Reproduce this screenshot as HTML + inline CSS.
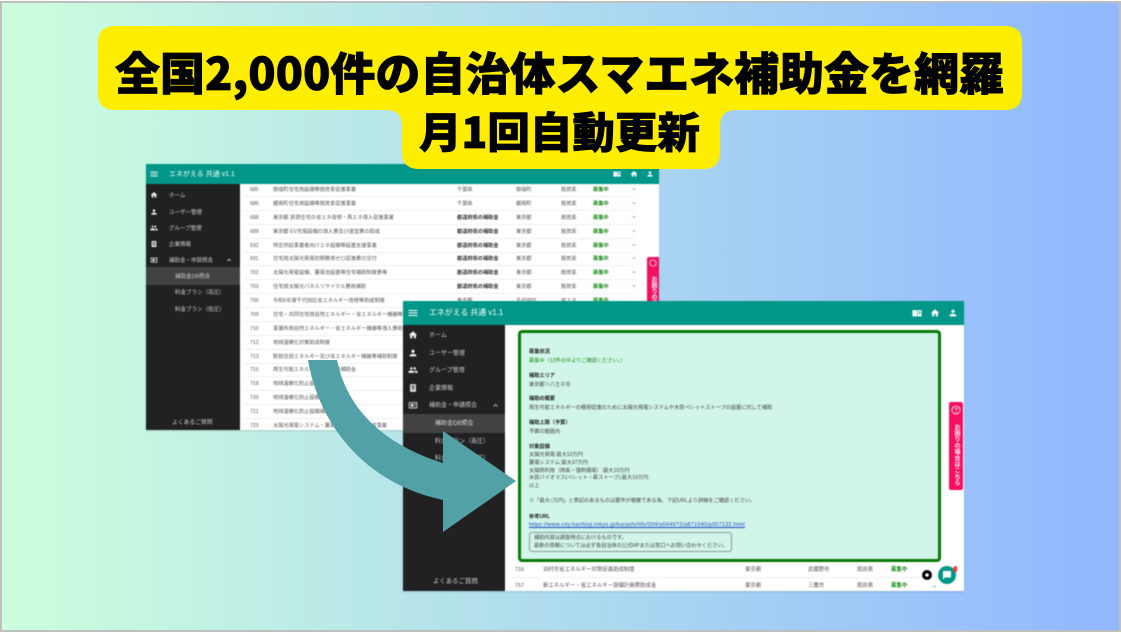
<!DOCTYPE html>
<html lang="ja"><head><meta charset="utf-8"><title>エネがえる</title>
<style>
html,body{margin:0;padding:0;width:1121px;height:633px;overflow:hidden;background:#fff}
*{box-sizing:border-box}
body{font-family:"Liberation Sans","Noto Sans CJK JP",sans-serif;position:relative}
.bg{position:absolute;left:0;top:1px;width:1121px;height:631px;border:2px solid #bfbfbf;background:linear-gradient(90deg,#ccffdd 0%,#91b7ff 100%)}
.app{position:absolute;background:#fff;overflow:hidden;filter:blur(.5px);box-shadow:0 1px 2px rgba(0,0,0,.12)}
.abs,.app div,.app span.t{position:absolute;white-space:nowrap}
.hd{left:0;top:0;background:#009688;color:#fff}
.sb{left:0;background:#212121;color:#ddd}
.r{left:0;height:1px;background:#eee}
.a1{font-size:5.2px;color:#555;line-height:8px}
.a2{font-size:5.4px;color:#555;line-height:8px}
.b{font-weight:700;color:#333}
.g{font-weight:700;color:#138a13}
.box div{font-size:5.2px;line-height:8px;color:#444}
.box .h{font-weight:700;color:#222}
svg.i{position:absolute;fill:currentColor}
.ttl{position:absolute;font-weight:900;color:#000;white-space:nowrap;font-family:"Noto Sans CJK JP","Liberation Sans",sans-serif;filter:blur(.35px);-webkit-text-stroke:.8px #000}
.s1{color:#ccc;font-size:5.5px;margin-top:1px}
.s2{color:#ccc;font-size:6px;margin-top:2px}
</style></head><body>
<svg width="0" height="0" style="position:absolute"><defs>
<symbol id="home" viewBox="0 0 24 24"><path d="M10 20v-6h4v6h5v-8h3L12 3 2 12h3v8z"/></symbol>
<symbol id="user" viewBox="0 0 24 24"><path d="M12 12c2.200 0 4-1.800 4-4s-1.800-4-4-4-4 1.800-4 4 1.800 4 4 4zm0 2c-2.700 0-8 1.300-8 4v2h16v-2c0-2.700-5.300-4-8-4z"/></symbol>
<symbol id="group" viewBox="0 0 24 24"><path d="M16 11c1.700 0 3-1.300 3-3s-1.300-3-3-3-3 1.300-3 3 1.300 3 3 3zm-8 0c1.700 0 3-1.300 3-3S9.700 5 8 5 5 6.300 5 8s1.300 3 3 3zm0 2c-2.300 0-7 1.200-7 3.500V19h14v-2.500C15 14.200 10.300 13 8 13zm8 0h-1c1.200.8 2 2 2 3.500V19h6v-2.500c0-2.300-4.700-3.500-7-3.500z"/></symbol>
<symbol id="biz" viewBox="0 0 24 24"><path d="M5 3h14v18H5zM8 6v2h8V6zm0 4v2h8v-2zm0 4v2h8v-2z" fill-rule="evenodd"/></symbol>
<symbol id="calc" viewBox="0 0 24 24"><path d="M2 5h20v15H2zM4 7v11h16V7zM7 9h6v7H7zM15 9h3v2h-3zM15 13h3v2h-3z" fill-rule="evenodd"/></symbol>
<symbol id="book" viewBox="0 0 24 24"><path d="M1 5h11v15H1zM13 5h10v15H13zM15 8v2h6V8zm0 4v2h6v-2z" fill-rule="evenodd"/></symbol>
<symbol id="menu" viewBox="0 0 24 24"><path d="M3 6h18v2H3zm0 5h18v2H3zm0 5h18v2H3z"/></symbol>
<symbol id="chev" viewBox="0 0 24 24"><path d="M7.400 8.600 12 13.200l4.600-4.600L18 10l-6 6-6-6z"/></symbol>
<symbol id="up" viewBox="0 0 24 24"><path d="M7.400 15.400 12 10.800l4.600 4.600L18 14l-6-6-6 6z"/></symbol>
</defs></svg>

<div class="bg"></div>

<!-- APP 1 -->
<div class="app a1" style="left:146px;top:164px;width:513px;height:266px">
<div class="hd" style="width:513px;height:20px"></div>
<svg class="i" style="left:3px;top:5px;color:#fff" width="10" height="10"><use href="#menu"/></svg>
<div style="left:23px;top:6px;color:#fff;font-size:7px;line-height:9px">エネがえる 共通 v1.1</div>
<svg class="i" style="left:467px;top:6px;color:#fff" width="8" height="8"><use href="#book"/></svg>
<svg class="i" style="left:484px;top:6px;color:#fff" width="8" height="8"><use href="#home"/></svg>
<svg class="i" style="left:500px;top:6px;color:#fff" width="8" height="8"><use href="#user"/></svg>

<div class="sb" style="top:20px;width:94px;height:246px"></div>
<div style="left:0;top:103px;width:94px;height:18px;background:#424242"></div>
<svg class="i" style="left:4px;top:27px;color:#eee" width="8" height="8"><use href="#home"/></svg>
<svg class="i" style="left:4px;top:44px;color:#eee" width="8" height="8"><use href="#user"/></svg>
<svg class="i" style="left:4px;top:60px;color:#eee" width="8" height="8"><use href="#group"/></svg>
<svg class="i" style="left:4px;top:76px;color:#eee" width="8" height="8"><use href="#biz"/></svg>
<svg class="i" style="left:4px;top:92px;color:#eee" width="8" height="8"><use href="#calc"/></svg>
<svg class="i" style="left:79px;top:92px;color:#eee" width="8" height="8"><use href="#up"/></svg>
<div class="s1" style="left:23px;top:27px">ホーム</div>
<div class="s1" style="left:23px;top:44px">ユーザー管理</div>
<div class="s1" style="left:23px;top:60px">グループ管理</div>
<div class="s1" style="left:23px;top:76px">企業情報</div>
<div class="s1" style="left:23px;top:92px">補助金・申請照会</div>
<div class="s1" style="left:29px;top:108px">補助金DB照会</div>
<div class="s1" style="left:29px;top:124px">料金プラン（高圧）</div>
<div class="s1" style="left:29px;top:141px">料金プラン（低圧）</div>
<div class="s1" style="left:26px;top:254px;font-size:5.800px">よくあるご質問</div>

<div style="left:104px;top:22px">685</div><div style="left:127px;top:22px">御宿町住宅用設備等脱炭素促進事業</div><div style="left:311px;top:22px">千葉県</div><div style="left:370px;top:22px">御宿町</div><div style="left:415px;top:22px">脱炭素</div><div class="g" style="left:447px;top:22px">募集中</div>
<div style="left:104px;top:36px">686</div><div style="left:127px;top:36px">鋸南町住宅用設備等脱炭素促進事業</div><div style="left:311px;top:36px">千葉県</div><div style="left:370px;top:36px">鋸南町</div><div style="left:415px;top:36px">脱炭素</div><div class="g" style="left:447px;top:36px">募集中</div>
<div style="left:104px;top:50px">688</div><div style="left:127px;top:50px">東京都 賃貸住宅の省エネ改修・再エネ導入促進事業</div><div class="b" style="left:311px;top:50px">都道府県の補助金</div><div style="left:370px;top:50px">東京都</div><div style="left:415px;top:50px">脱炭素</div><div class="g" style="left:447px;top:50px">募集中</div>
<div style="left:104px;top:64px">689</div><div style="left:127px;top:64px">東京都 EV充電設備の導入費及び運営費の助成</div><div class="b" style="left:311px;top:64px">都道府県の補助金</div><div style="left:370px;top:64px">東京都</div><div style="left:415px;top:64px">脱炭素</div><div class="g" style="left:447px;top:64px">募集中</div>
<div style="left:104px;top:78px">692</div><div style="left:127px;top:78px">特定供給事業者向けエネ設備等設置支援事業</div><div class="b" style="left:311px;top:78px">都道府県の補助金</div><div style="left:370px;top:78px">東京都</div><div style="left:415px;top:78px">脱炭素</div><div class="g" style="left:447px;top:78px">募集中</div>
<div style="left:104px;top:91px">691</div><div style="left:127px;top:91px">住宅用太陽光発電初期費用ゼロ促進費の交付</div><div class="b" style="left:311px;top:91px">都道府県の補助金</div><div style="left:370px;top:91px">東京都</div><div style="left:415px;top:91px">脱炭素</div><div class="g" style="left:447px;top:91px">募集中</div>
<div style="left:104px;top:105px">702</div><div style="left:127px;top:105px">太陽光発電設備、蓄電池設置等住宅補助制度費等</div><div class="b" style="left:311px;top:105px">都道府県の補助金</div><div style="left:370px;top:105px">東京都</div><div style="left:415px;top:105px">脱炭素</div><div class="g" style="left:447px;top:105px">募集中</div>
<div style="left:104px;top:119px">703</div><div style="left:127px;top:119px">住宅用太陽光パネルリサイクル費用補助</div><div class="b" style="left:311px;top:119px">都道府県の補助金</div><div style="left:370px;top:119px">東京都</div><div style="left:415px;top:119px">脱炭素</div><div class="g" style="left:447px;top:119px">募集中</div>
<div style="left:104px;top:133px">705</div><div style="left:127px;top:133px">令和6年度千代田区省エネルギー改修等助成制度</div><div style="left:311px;top:133px">東京都</div><div style="left:370px;top:133px">千代田区</div><div style="left:415px;top:133px">省エネ</div><div class="g" style="left:447px;top:133px">募集中</div>
<div style="left:104px;top:147px">709</div><div style="left:127px;top:147px">住宅・共同住宅用自然エネルギー・省エネルギー機器等導入</div>
<div style="left:104px;top:161px">710</div><div style="left:127px;top:161px">事業所用自然エネルギー・省エネルギー機器等導入費助成</div>
<div style="left:104px;top:175px">712</div><div style="left:127px;top:175px">地球温暖化対策助成制度</div>
<div style="left:104px;top:189px">713</div><div style="left:127px;top:189px">駅前住民エネルギー及び省エネルギー機器等補助制度</div>
<div style="left:104px;top:202px">715</div><div style="left:127px;top:202px">再生可能エネルギー導入促進補助金</div>
<div style="left:104px;top:216px">718</div><div style="left:127px;top:216px">地球温暖化防止設備補助</div>
<div style="left:104px;top:230px">720</div><div style="left:127px;top:230px">地球温暖化防止設備補助</div>
<div style="left:104px;top:244px">721</div><div style="left:127px;top:244px">地球温暖化防止設備補助</div>
<div style="left:104px;top:258px">723</div><div style="left:127px;top:258px">太陽光発電システム・蓄電池等導入費用助成事業</div>
<div class="r" style="top:32px;width:390px;left:98px"></div><div class="r" style="top:46px;width:390px;left:98px"></div><div class="r" style="top:60px;width:390px;left:98px"></div><div class="r" style="top:74px;width:390px;left:98px"></div><div class="r" style="top:88px;width:390px;left:98px"></div><div class="r" style="top:101px;width:390px;left:98px"></div><div class="r" style="top:115px;width:390px;left:98px"></div><div class="r" style="top:129px;width:390px;left:98px"></div><div class="r" style="top:143px;width:390px;left:98px"></div><div class="r" style="top:157px;width:390px;left:98px"></div><div class="r" style="top:171px;width:390px;left:98px"></div><div class="r" style="top:185px;width:390px;left:98px"></div><div class="r" style="top:199px;width:390px;left:98px"></div><div class="r" style="top:212px;width:390px;left:98px"></div><div class="r" style="top:226px;width:390px;left:98px"></div><div class="r" style="top:240px;width:390px;left:98px"></div><div class="r" style="top:254px;width:390px;left:98px"></div>
<svg class="i" style="left:485px;top:22px;color:#2a9d8f" width="6" height="6"><use href="#chev"/></svg>
<svg class="i" style="left:485px;top:36px;color:#2a9d8f" width="6" height="6"><use href="#chev"/></svg>
<svg class="i" style="left:485px;top:50px;color:#2a9d8f" width="6" height="6"><use href="#chev"/></svg>
<svg class="i" style="left:485px;top:64px;color:#2a9d8f" width="6" height="6"><use href="#chev"/></svg>
<svg class="i" style="left:485px;top:78px;color:#2a9d8f" width="6" height="6"><use href="#chev"/></svg>
<svg class="i" style="left:485px;top:91px;color:#2a9d8f" width="6" height="6"><use href="#chev"/></svg>
<svg class="i" style="left:485px;top:105px;color:#2a9d8f" width="6" height="6"><use href="#chev"/></svg>
<svg class="i" style="left:485px;top:119px;color:#2a9d8f" width="6" height="6"><use href="#chev"/></svg>
<div style="left:501px;top:93px;width:12px;height:60px;background:#f50f5f;border-radius:2px 0 0 2px;color:#fff;font-weight:700;font-size:6px;line-height:12px;writing-mode:vertical-rl;text-align:center;padding-top:13px">お困りの場合</div>
<svg class="abs" style="left:503px;top:95px" width="8" height="8" viewBox="0 0 8 8"><circle cx="4" cy="4" r="3.200" fill="none" stroke="#fff" stroke-width=".7"/></svg>
</div>

<!-- APP 2 -->
<div class="app a2" style="left:403px;top:301px;width:561px;height:290px">
<div class="hd" style="width:561px;height:24px"></div>
<svg class="i" style="left:4px;top:6px;color:#fff" width="12" height="12"><use href="#menu"/></svg>
<div style="left:26px;top:6px;color:#fff;font-size:7.900px;line-height:11px">エネがえる 共通 v1.1</div>
<svg class="i" style="left:509px;top:7px;color:#fff" width="10" height="10"><use href="#book"/></svg>
<svg class="i" style="left:527px;top:7px;color:#fff" width="10" height="10"><use href="#home"/></svg>
<svg class="i" style="left:545px;top:7px;color:#fff" width="10" height="10"><use href="#user"/></svg>

<div class="sb" style="top:24px;width:102px;height:266px"></div>
<div style="left:0;top:113px;width:102px;height:19px;background:#424242"></div>
<svg class="i" style="left:5px;top:29px;color:#eee" width="10" height="10"><use href="#home"/></svg>
<svg class="i" style="left:5px;top:47px;color:#eee" width="10" height="10"><use href="#user"/></svg>
<svg class="i" style="left:5px;top:64px;color:#eee" width="10" height="10"><use href="#group"/></svg>
<svg class="i" style="left:5px;top:82px;color:#eee" width="10" height="10"><use href="#biz"/></svg>
<svg class="i" style="left:5px;top:99px;color:#eee" width="10" height="10"><use href="#calc"/></svg>
<svg class="i" style="left:88px;top:100px;color:#eee" width="9" height="9"><use href="#up"/></svg>
<div class="s2" style="left:26px;top:29px">ホーム</div>
<div class="s2" style="left:26px;top:47px">ユーザー管理</div>
<div class="s2" style="left:26px;top:64px">グループ管理</div>
<div class="s2" style="left:26px;top:82px">企業情報</div>
<div class="s2" style="left:26px;top:99px">補助金・申請照会</div>
<div class="s2" style="left:32px;top:117px;color:#ddd">補助金DB照会</div>
<div class="s2" style="left:32px;top:135px">料金プラン（高圧）</div>
<div class="s2" style="left:32px;top:152px">料金プラン（低圧）</div>
<div class="s2" style="left:30px;top:275px;font-size:6.400px">よくあるご質問</div>

<div class="box" style="left:115px;top:29px;width:423px;height:232px;background:#d1f5e8;border:3px solid #067a06;border-radius:4px">
<div style="left:0;top:2px;width:100%;height:100%">
<div class="h" style="left:8px;top:13px">募集状況</div>
<div style="left:8px;top:22px;color:#1e8c1e">募集中（13件の中よりご確認ください。）</div>
<div class="h" style="left:8px;top:37px">補助エリア</div>
<div style="left:8px;top:46px">東京都＞八王子市</div>
<div class="h" style="left:8px;top:60px">補助の概要</div>
<div style="left:8px;top:69px">再生可能エネルギーの積極促進のために太陽光発電システムや木質ペレットストーブの設置に対して補助</div>
<div class="h" style="left:8px;top:84px">補助上限（予算）</div>
<div style="left:8px;top:93px">予算の範囲内</div>
<div class="h" style="left:8px;top:108px">対象設備</div>
<div style="left:8px;top:116px">太陽光発電:最大10万円</div>
<div style="left:8px;top:124px">蓄電システム:最大37万円</div>
<div style="left:8px;top:132px">太陽熱利用（西条・強制循環）:最大10万円</div>
<div style="left:8px;top:139px">木質バイオマス(ペレット・薪ストーブ):最大10万円</div>
<div style="left:8px;top:147px">以上</div>
<div style="left:8px;top:162px">※「最大○万円」と表記のあるものは要件が複雑である為、下記URLより詳細をご確認ください。</div>
<div class="h" style="left:8px;top:178px">参考URL</div>
<div style="left:8px;top:186px;color:#1a3fc4;text-decoration:underline;font-size:5.400px;letter-spacing:.28px">https://www.city.hachioji.tokyo.jp/kurashi/life/004/a0449?2/a871040/p007132.html</div>
<div style="left:8px;top:197px;width:203px;height:20px;border:1px solid #8a9a90;border-radius:3px"></div>
<div style="left:13px;top:199px">補助内容は調査時点におけるものです。</div>
<div style="left:13px;top:207px">最新の情報については必ず各自治体の公式HPまたは窓口へお問い合わせください。</div>
</div>
</div>

<div style="left:112px;top:265px">716</div><div style="left:140px;top:265px">羽村市省エネルギー対策促進助成制度</div><div style="left:342px;top:265px">東京都</div><div style="left:405px;top:265px">武蔵野市</div><div style="left:454px;top:265px">脱炭素</div><div class="g" style="left:488px;top:265px">募集中</div>
<div class="r" style="left:108px;top:276px;width:430px"></div>
<div style="left:112px;top:281px">757</div><div style="left:140px;top:281px">新エネルギー・省エネルギー設備計画費助成金</div><div style="left:342px;top:281px">東京都</div><div style="left:405px;top:281px">三鷹市</div><div style="left:454px;top:281px">脱炭素</div><div class="g" style="left:488px;top:281px">募集中</div>
<svg class="i" style="left:528px;top:282px;color:#2a9d8f" width="7" height="7"><use href="#chev"/></svg>

<div style="left:546px;top:101px;width:14px;height:88px;background:#f50f5f;border-radius:2px;color:#fff;font-weight:700;font-size:6px;line-height:14px;writing-mode:vertical-rl;text-align:center;padding-top:18px;letter-spacing:.2px">お困りの場合はこちら</div>
<svg class="abs" style="left:548px;top:104px" width="10" height="10" viewBox="0 0 10 10"><circle cx="5" cy="5" r="4" fill="none" stroke="#fff" stroke-width=".8"/><path d="M3.800 4c.2-1.500 2.500-1.300 2.400 0 0 .8-1.200.9-1.200 1.900" fill="none" stroke="#fff" stroke-width=".7"/><circle cx="5" cy="7.300" r=".5" fill="#fff"/></svg>

<svg class="abs" style="left:517px;top:264px" width="37" height="24" viewBox="0 0 37 24"><circle cx="7" cy="10" r="5" fill="#000"/><circle cx="7" cy="10" r="1.800" fill="#fff"/><circle cx="27" cy="10" r="9" fill="#009688"/><path d="M23 6h8v6.500h-6L23 14.500z" fill="#fff"/><circle cx="36" cy="4" r="3" fill="#f33"/></svg>
</div>

<!-- Arrow -->
<svg class="abs" style="position:absolute;left:0;top:0;filter:blur(.3px)" width="1121" height="633" viewBox="0 0 1121 633">
<path d="M308 360 L337 360 C347 410 385 445 443 463 L443 431 L516 481 L443 532 L443 500 C370 485 320 430 308 360 Z" fill="#52a1a6"/>
</svg>

<!-- Banner -->
<svg class="abs" style="position:absolute;left:0;top:0" width="1121" height="633" viewBox="0 0 1121 633">
<path d="M115 26 H1005 Q1022 26 1022 43 V93 Q1022 110 1005 110 H736 Q720 110 720 126 V152 Q720 169 703 169 H419 Q402 169 402 152 V126 Q402 110 386 110 H115 Q98 110 98 93 V43 Q98 26 115 26 Z" fill="#ffee00"/>
</svg>
<div class="ttl" style="left:115px;top:38px;font-size:45px;line-height:66px;letter-spacing:0">全国2,000件の自治体スマエネ補助金を網羅</div>
<div class="ttl" style="left:419px;top:100px;font-size:42.500px;line-height:62px">月1回自動更新</div>
</body></html>
